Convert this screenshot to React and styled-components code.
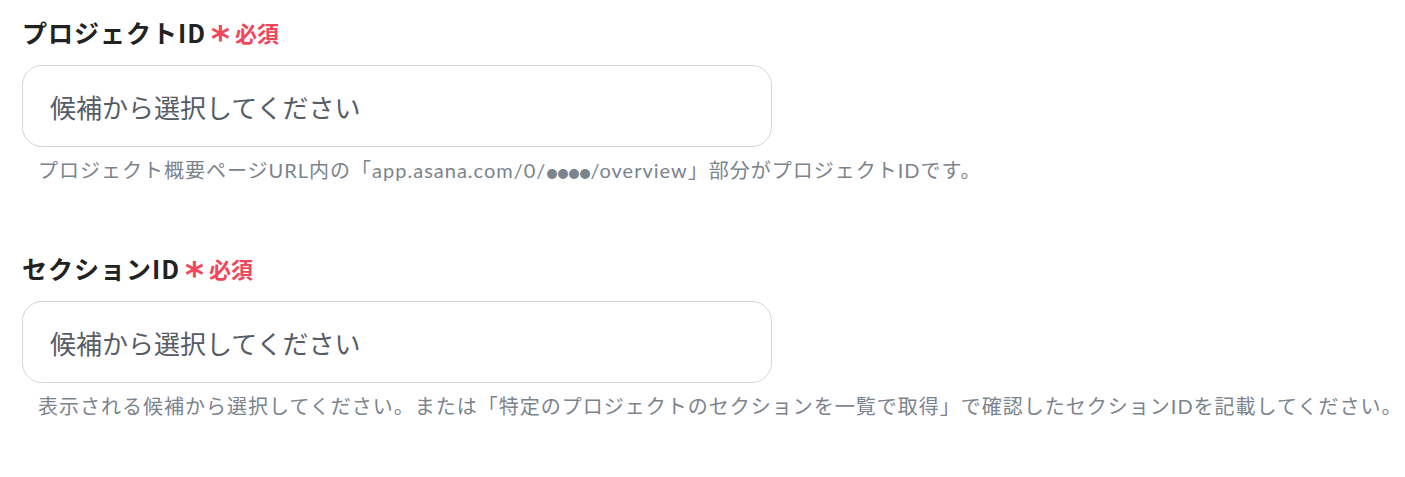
import React from "react";
import styled, { createGlobalStyle } from "styled-components";

const GlobalStyle = createGlobalStyle`
  body {
    margin: 0;
    background: #ffffff;
    font-family: "Noto Sans CJK JP", "Noto Sans", sans-serif;
  }
`;

const Page = styled.div`
  padding: 15px 22px 0;
  display: flex;
  flex-direction: column;
  gap: 65px;
`;

const Field = styled.div`
  display: flex;
  flex-direction: column;
`;

const Label = styled.div`
  display: flex;
  align-items: center;
  height: 34px;
  font-size: 25px;
  letter-spacing: 1px;
  font-weight: 700;
  color: #222222;
  line-height: 34px;
  margin-bottom: 16px;
`;

const Required = styled.span`
  display: inline-flex;
  align-items: center;
  margin-left: 5px;
  color: #f2465b;
  font-size: 22px;
  letter-spacing: 0;
  font-weight: 700;
  gap: 5px;
`;

const Star = styled.span`
  font-family: "DejaVu Sans", sans-serif;
  font-size: 36px;
  line-height: 24px;
  position: relative;
  top: 7px;
`;

const Box = styled.div`
  width: 750px;
  height: 82px;
  box-sizing: border-box;
  border: 1px solid #d3d5da;
  border-radius: 20px;
  display: flex;
  align-items: center;
  padding-left: 27px;
  font-size: 26px;
  color: #555c66;
`;

const Help = styled.div`
  margin-top: 10px;
  padding-left: 16px;
  font-family: "Lato", "Noto Sans CJK JP", sans-serif;
  font-size: 20px;
  letter-spacing: 1px;
  color: #7b838d;
  line-height: 26px;
  white-space: nowrap;
`;

const Dots = styled.span`
  font-family: "Noto Sans CJK JP", sans-serif;
  font-size: 11px;
  letter-spacing: 0;
`;

function FormField({ label, children }) {
  return (
    <Field>
      <Label>
        {label}
        <Required>
          <Star>*</Star>必須
        </Required>
      </Label>
      <Box>候補から選択してください</Box>
      <Help>{children}</Help>
    </Field>
  );
}

export default function App() {
  return (
    <>
      <GlobalStyle />
      <Page>
        <FormField label="プロジェクトID">
          プロジェクト概要ページURL内の「app.asana.com/0/<Dots>●●●●</Dots>
          /overview」部分がプロジェクトIDです。
        </FormField>
        <FormField label="セクションID">
          表示される候補から選択してください。または「特定のプロジェクトのセクションを一覧で取得」で確認したセクションIDを記載してください。
        </FormField>
      </Page>
    </>
  );
}
